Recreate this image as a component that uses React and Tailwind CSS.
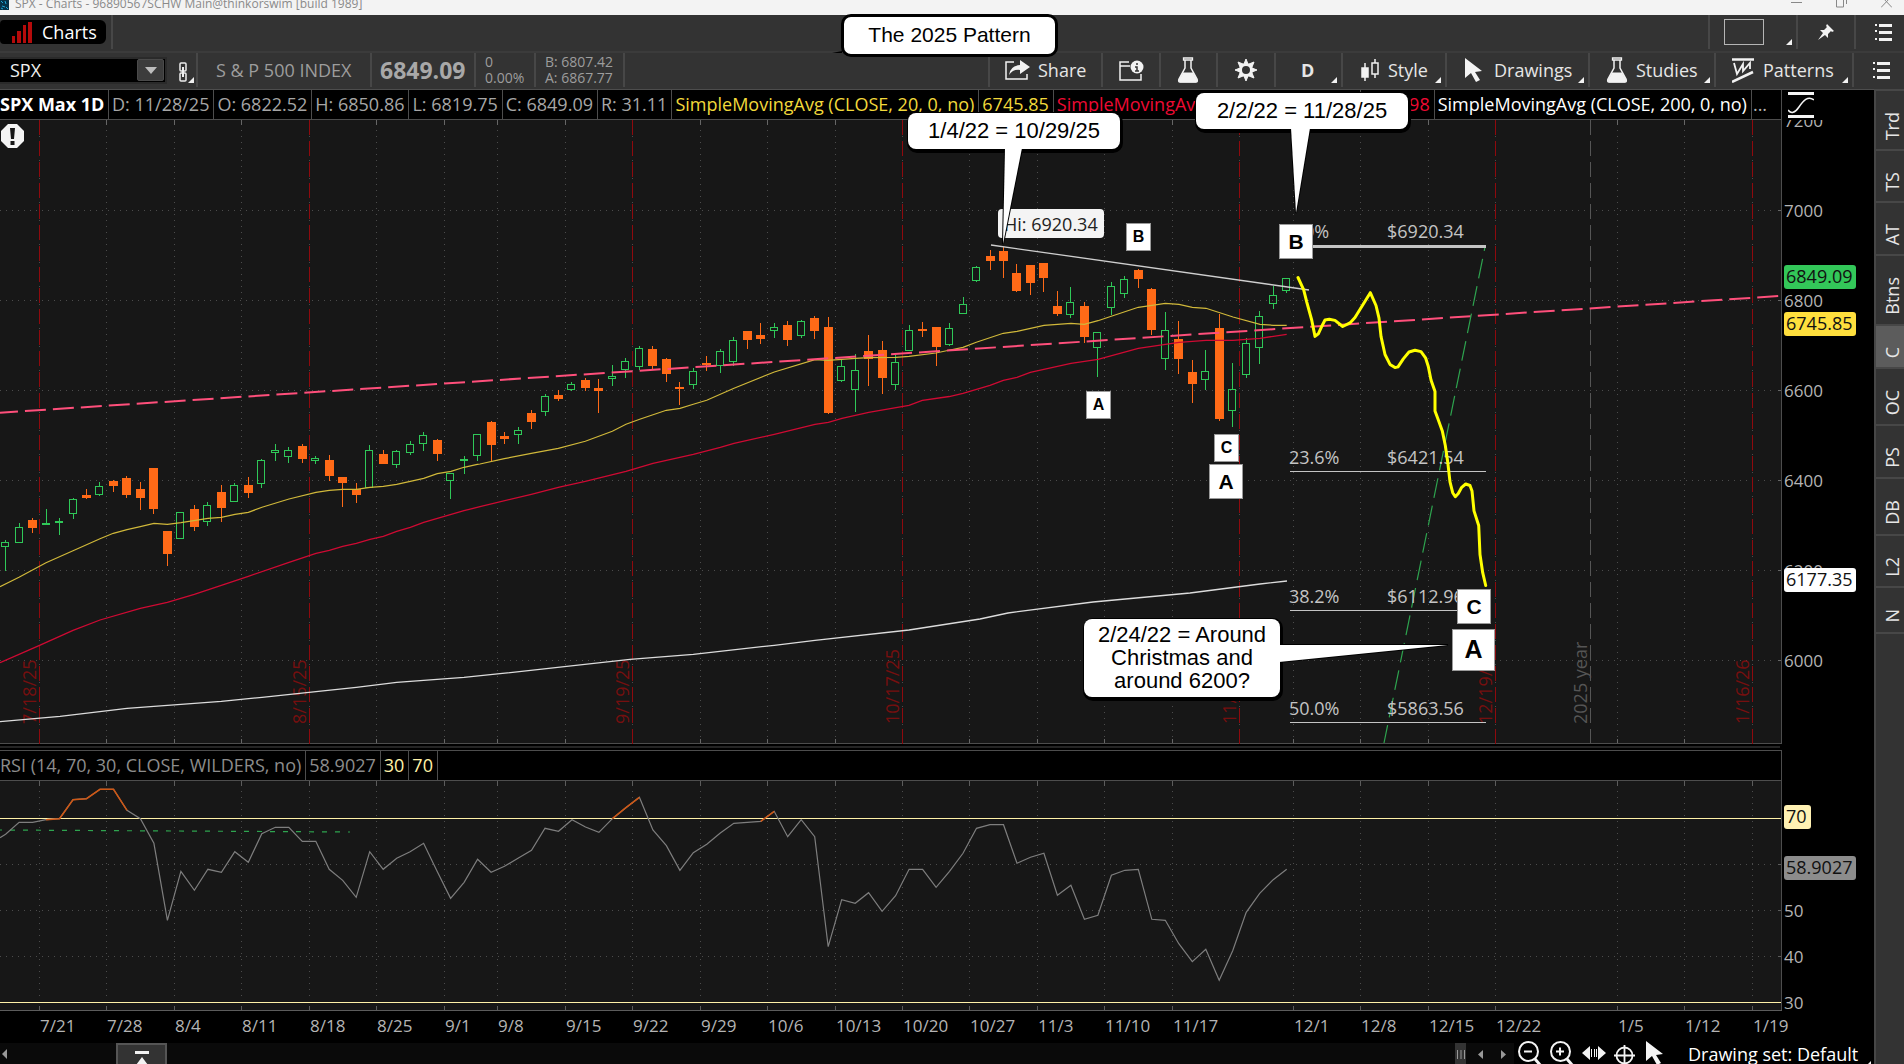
import React from "react";

const STEP = 13.485;
const FIRST = 5.6;
const cx = (i) => FIRST + i * STEP;

/* Candles: [direction, body top, body bottom, wick top, wick bottom], in thirds of a pixel below `base`. */
const CANDLES = [
  { base: 360, rows: [
    ["u",547,560,540,633],["u",501,548,489,548],["d",480,504,474,519],["u",489,494,447,494],["u",483,488,474,525],["u",418,461,414,477],["d",405,414,387,417],["u",378,405,366,408],["d",363,378,360,396],["d",354,405,348,414],["d",387,414,366,450],["d",324,447,324,462],["d",513,582,513,618],["u",457,536,457,536],["d",447,501,435,513],["u",435,486,426,498],["d",396,444,375,486],["u",375,425,369,425],["d",375,399,351,414],["u",300,371,297,384],["u",270,278,252,303],["u",270,290,261,309],["d",258,297,252,309],["u",294,302,288,312],["d",300,348,285,363],["d",351,369,351,441],["d",387,405,369,429],["u",270,383,255,383],["d",282,312,270,312],["u",273,314,270,324],["u",252,278,243,285],["u",225,251,216,273],["d",240,282,237,303],["u",339,362,339,417],["u",297,302,288,342],["u",222,288,222,303],["d",186,255,183,303],
  ] },
  { base: 280, rows: [
    ["d",468,477,456,492],["u",450,465,441,492],["d",399,426,390,447],["u",348,396,342,408],["d",345,357,330,363],["u",312,329,306,333],["d",300,324,294,333],["d",324,333,297,399],["u",288,297,255,318],["u",243,270,234,294],["u",204,261,198,270],["d",207,258,198,270],["d",237,282,234,306],["d",321,327,306,375],["u",273,315,264,327],["d",249,255,228,273],["u",213,258,207,279],["u",180,245,171,258],["d",153,180,153,207],["d",165,177,129,192],["u",141,153,129,174],["d",135,180,123,198],["u",123,168,120,174],["d",114,153,108,177],["d",141,399,111,402],["u",258,302,240,306],["u",270,329,222,396],["d",213,237,165,318],["d",210,294,183,342],["u",246,315,225,330],["u",150,213,135,213],["d",147,153,126,171],["d",141,201,141,258],["u",144,195,129,198],["u",72,102,51,102],
  ] },
  { base: 200, rows: [
    ["u",201,243,198,246],["d",168,183,150,210],["d",153,183,141,234],["d",219,273,192,276],["d",195,249,195,285],["d",189,234,189,276],["d",318,342,273,348],["u",306,345,261,354],["d",318,411,306,429],["u",396,443,396,531],["u",258,323,246,345],["u",237,282,228,294],["d",210,237,207,264],["d",267,390,264,405],["u",390,476,336,510],["d",417,477,363,522],["d",516,552,480,609],["u",513,540,450,570],["d",384,657,342,663],["u",567,632,489,681],["u",429,524,414,534],["u",348,443,333,492],["u",285,312,258,327],["u",234,272,234,279],
  ] },
].flatMap(({ base, rows }) => rows.map(([dir, ...v]) => [dir, ...v.map((y) => Math.round(base + y / 3))]));

const third = (ox, oy, list) => list.map(([x, y]) => `${(ox + x / 3).toFixed(1)},${(oy + y / 3).toFixed(1)}`).join(" ");

const MA20 = [
  third(0, 360, [[0,680],[57,652],[138,608],[219,572],[300,536],[340,520],[381,509],[421,500],[462,490],[502,493],[543,488],[624,475],[664,472],[705,463],[745,457],[786,442],[867,417],[948,397],[988,391],[1028,388],[1069,388],[1110,382],[1150,379],[1190,373],[1231,364],[1271,355],[1312,341],[1353,334],[1392,322],[1432,313]]),
  third(480, 280, [[0,552],[73,536],[154,520],[235,505],[316,484],[397,454],[438,433],[479,418],[519,404],[559,391],[600,385],[640,373],[680,361],[762,325],[883,276],[1005,239],[1045,241],[1126,235],[1166,233],[1248,232],[1287,229],[1368,219],[1410,210]]),
  third(900, 200, [[189,442],[229,427],[310,400],[351,394],[432,376],[513,370],[553,373],[594,362],[634,349],[715,322],[756,316],[796,310],[837,313],[877,322],[918,325],[999,351],[1080,373],[1120,376],[1160,376]]),
].join(" ");

const MA50 = [
  third(0, 360, [[0,908],[117,857],[219,811],[300,780],[421,745],[502,727],[583,703],[664,676],[745,649],[867,607],[948,580],[988,571],[1028,559],[1069,550],[1110,538],[1150,529],[1190,514],[1231,502],[1271,487],[1392,452]]),
  third(480, 280, [[0,680],[154,643],[235,622],[316,604],[438,574],[519,550],[640,523],[721,502],[762,490],[883,463],[1005,433],[1045,427],[1086,415],[1166,397],[1287,376],[1327,361],[1408,349]]),
  third(900, 200, [[68,601],[148,590],[189,580],[270,556],[310,541],[351,532],[391,517],[513,490],[594,478],[715,445],[837,427],[918,421],[999,421],[1080,415],[1160,403]]),
].join(" ");

const MA200 = [
  third(0, 360, [[0,1085],[180,1069],[381,1045],[664,1024],[786,1012],[948,995],[1069,982],[1190,967],[1392,952],[1500,941]]),
  third(480, 280, [[450,1138],[640,1123],[883,1096],[1005,1081],[1287,1050],[1500,1017]]),
  "1008,613 1093,602 1190,593 1260,584 1287,581",
].join(" ");

const WAVE = [[114,268],[131,302],[140,335],[155,385],[165,430],[175,423],[184,405],[195,385],[208,383],[225,386],[248,403],[270,393],[285,378],[331,310],[348,345],[357,380],[363,430],[375,480],[390,507],[405,516],[414,514],[430,492],[447,473],[465,468],[483,472],[497,490],[505,513],[513,550],[525,582],[525,635],[533,655],[547,690],[556,730],[563,775],[570,830],[578,860],[586,871],[595,862],[605,845],[617,836],[630,840],[636,855],[642,910],[656,950],[660,1030],[668,1080],[677,1115]]
  .map(([x, y]) => `${(1260 + x / 3).toFixed(1)},${(180 + y / 2.75).toFixed(1)}`).join(" ");

const RSI = [283,247,247,239,236,179,176,148,148,211,236,310,541,394,451,388,397,335,367,281,262,262,304,304,388,421,472,335,388,355,335,310,394,475,427,358,397,379,355,331,265,274,239,261,277,236,203,172,270,317,391,338,313,279,250,247,244,214,290,239,290,620,479,490,458,514,467,388,388,442,394,340,265,254,254,370,352,340,466,436,538,526,406,391,388,538,541,611,665,628,721,632,517,460,419,388]
  .map((y, i) => [cx(i), 740 + y / 3]);
const rsiPoints = (from, to) => RSI.slice(from, to + 1).map(([x, y]) => `${x.toFixed(1)},${y.toFixed(1)}`).join(" ");

const WEEKS = [
  [39,"7/21"],[106,"7/28"],[174,"8/4"],[241,"8/11"],[309,"8/18"],[376,"8/25"],[444,"9/1"],[497,"9/8"],[565,"9/15"],[632,"9/22"],[700,"9/29"],[767,"10/6"],[835,"10/13"],[902,"10/20"],[969,"10/27"],[1037,"11/3"],[1104,"11/10"],[1172,"11/17"],[1293,"12/1"],[1360,"12/8"],[1428,"12/15"],[1495,"12/22"],[1617,"1/5"],[1684,"1/12"],[1752,"1/19"],
];
const EXPIRIES = [[39,"7/18/25"],[309,"8/15/25"],[632,"9/19/25"],[902,"10/17/25"],[1239,"11/21/25"],[1495,"12/19/25"],[1752,"1/16/26"]];
const LEVELS = [[246,"0.0%","$6920.34"],[472,"23.6%","$6421.54"],[611,"38.2%","$6112.96"],[723,"50.0%","$5863.56"]];
const LETTERS = [
  ["B",1126,223,25,28,16],["A",1086,391,25,28,16],["C",1214,434,25,28,16],
  ["A",1209,464,34,35,21],["B",1279,224,34,35,21],["C",1457,589,34,35,21],["A",1452,629,43,42,25],
];

function Tag({ x = 1784, y, w = 72, fill, color = "#111", children }) {
  return (
    <g className="text-[18px]">
      <rect x={x} y={y} width={w} height="24" rx="3" fill={fill} />
      <text x={x + 2} y={y + 18} fill={color}>{children}</text>
    </g>
  );
}

function Callout({ x, y, w, h, tail, lines }) {
  return (
    <g className="font-['Liberation_Sans',sans-serif] text-[22px]">
      <rect x={x - 1} y={y - 1} width={w + 4} height={h + 5} rx="10" fill="#000" />
      <polygon points={tail} fill="#fff" stroke="#000" strokeWidth="2" />
      <rect x={x} y={y} width={w} height={h} rx="8" fill="#fff" />
      <polygon points={tail} fill="#fff" />
      {lines.map((t, i) => (
        <text key={t} x={x + w / 2} y={y + h / 2 + 7 + (i - (lines.length - 1) / 2) * 23} textAnchor="middle" fill="#000">{t}</text>
      ))}
    </g>
  );
}

function PricePane() {
  return (
    <svg viewBox="0 120 1874 624" className="relative block h-auto w-full overflow-visible bg-black text-[17px]" role="img" aria-label="SPX daily price chart">
      <defs>
        <clipPath id="pane"><rect x="0" y="120" width="1874" height="624" /></clipPath>
      </defs>
      <rect x="0" y="120" width="1782" height="624" fill="#171717" />
      <g stroke="#4c4c4c" strokeDasharray="1 5" shapeRendering="crispEdges">
        {[210, 300, 390, 480, 570, 660].map((y) => <line key={y} x1="0" x2="1772" y1={y + 0.5} y2={y + 0.5} />)}
        {WEEKS.map(([x]) => <line key={x} x1={x + 0.5} x2={x + 0.5} y1="130" y2="740" />)}
        <line x1="1239.5" x2="1239.5" y1="130" y2="740" />
      </g>
      <g stroke="#666" shapeRendering="crispEdges">
        {WEEKS.map(([x]) => <path key={x} d={`M${x + 0.5} 120v5M${x + 0.5} 739v4`} />)}
        {[210, 300, 390, 480, 570, 660].map((y) => <line key={y} x1="1778" x2="1782" y1={y + 0.5} y2={y + 0.5} />)}
        <line x1="1590.5" x2="1590.5" y1="120" y2="744" stroke="#555" strokeDasharray="15 6" />
        <line x1="1781.5" x2="1781.5" y1="120" y2="744" stroke="#4d4d4d" />
        <line x1="0" x2="1782" y1="743.5" y2="743.5" stroke="#4d4d4d" />
      </g>
      <g className="text-[18px]">
        {EXPIRIES.map(([x, t]) => (
          <g key={t}>
            <line x1={x + 0.5} x2={x + 0.5} y1="120" y2="744" stroke="#8e0a0e" strokeDasharray="15 6" shapeRendering="crispEdges" />
            <text transform={`translate(${x - 3} 724) rotate(-90)`} fill="#760f0f">{t}</text>
          </g>
        ))}
        <text transform="translate(1587 724) rotate(-90)" fill="#555">2025 year</text>
      </g>

      <g shapeRendering="crispEdges">
        {CANDLES.map(([dir, top, bottom, high, low], i) => {
          const x = Math.round(cx(i) - 0.5);
          const h = Math.max(bottom - top, 2);
          return dir === "d" ? (
            <g key={i} fill="#ff6a17">
              <rect x={x} y={high} width="1" height={low - high} />
              <rect x={x - 4} y={top} width="9" height={h} />
            </g>
          ) : (
            <g key={i} fill="#2fc858">
              <rect x={x} y={high} width="1" height={Math.max(top - high, 0)} />
              <rect x={x} y={bottom} width="1" height={Math.max(low - bottom, 0)} />
              {h < 3 ? <rect x={x - 4} y={top} width="8" height={h} /> : <rect x={x - 3.5} y={top + 0.5} width="7" height={h - 1} fill="none" stroke="#2fc858" />}
            </g>
          );
        })}
      </g>

      <g fill="none">
        <polyline points={MA20} stroke="#d0b83a" strokeWidth="1.2" />
        <polyline points={MA50} stroke="#cf0a33" strokeWidth="1.3" />
        <polyline points={MA200} stroke="#dcdcdc" strokeWidth="1.3" />
        <line x1="0" y1="412.7" x2="1779" y2="296" stroke="#ff4f7b" strokeWidth="2" strokeDasharray="21 7" strokeDashoffset="3" />
        <line x1="991" y1="245" x2="1309" y2="290" stroke="#cfcfcf" strokeWidth="1.3" />
        <line x1="1485" y1="247" x2="1384" y2="743" stroke="#2ea44f" strokeWidth="1.2" strokeDasharray="20 8" strokeDashoffset="16" />
      </g>

      {LEVELS.map(([y, pct, price], i) => (
        <g key={pct} fill="#c4c4c4" className="text-[18px]">
          <text x="1289" y={y - 8}>{pct}</text>
          <text x="1387" y={y - 8}>{price}</text>
          <rect x="1290" y={y - 1} width="196" height={i ? 1 : 3} shapeRendering="crispEdges" />
        </g>
      ))}
      <polyline points={WAVE} fill="none" stroke="#ffff00" strokeWidth="3" strokeLinejoin="round" strokeLinecap="round" />

      <g fill="#b4b4b4" clipPath="url(#pane)">
        {[7200, 7000, 6800, 6600, 6400, 6200, 6000].map((v, i) => <text key={v} x="1784" y={127 + i * 90}>{v}</text>)}
      </g>
      <Tag y={265} fill="#33c759">6849.09</Tag>
      <Tag y={312} fill="#ffdf3d">6745.85</Tag>
      <Tag y={568} fill="#fff">6177.35</Tag>

      <polygon points="8,124 17,124 24,131 24,141 17,148 8,148 1,141 1,131" fill="#f4f4f4" />
      <path d="M10 128h5l-1 11h-3zM10.500 141h4v4h-4z" fill="#171717" />

      <rect x="998" y="209" width="106" height="29" rx="4" fill="#f4f4f4" />
      <text x="1004" y="231" fill="#222" className="text-[18px]">Hi: 6920.34</text>

      <Callout x={908} y={113} w={212} h={36} tail="1005,148 1003,244 1022,148" lines={["1/4/22 = 10/29/25"]} />
      <Callout x={1196} y={93} w={212} h={36} tail="1291,128 1296,213 1310,128" lines={["2/2/22 = 11/28/25"]} />
      <Callout x={1084} y={619} w={196} h={78} tail="1279,645 1448,645 1279,662" lines={["2/24/22 = Around", "Christmas and", "around 6200?"]} />

      <g className="font-['Liberation_Sans',sans-serif] font-bold">
        {LETTERS.map(([t, x, y, w, h, s]) => (
          <g key={`${x}-${y}`}>
            <rect x={x + 0.5} y={y + 0.5} width={w - 1} height={h - 1} fill="#fff" stroke="#9a9a9a" />
            <text x={x + w / 2} y={y + h / 2 + Math.round(s / 3)} textAnchor="middle" fontSize={s} fill="#000">{t}</text>
          </g>
        ))}
      </g>
    </svg>
  );
}

function RsiPane() {
  return (
    <svg viewBox="0 781 1874 262" className="block h-auto w-full bg-black text-[17px]" role="img" aria-label="Relative strength index">
      <rect x="0" y="781" width="1782" height="230" fill="#171717" />
      <g stroke="#4c4c4c" strokeDasharray="1 5" shapeRendering="crispEdges">
        {[864, 910, 956].map((y) => <line key={y} x1="0" x2="1772" y1={y + 0.5} y2={y + 0.5} />)}
        {WEEKS.map(([x]) => <line key={x} x1={x + 0.5} x2={x + 0.5} y1="791" y2="1000" />)}
      </g>
      <g stroke="#5c5c5c" shapeRendering="crispEdges">
        {WEEKS.map(([x]) => <path key={x} d={`M${x + 0.5} 781v5M${x + 0.5} 1006v5`} />)}
        {[864, 910, 956].map((y) => <line key={y} x1="1778" x2="1782" y1={y + 0.5} y2={y + 0.5} />)}
        <line x1="1781.5" x2="1781.5" y1="781" y2="1011" stroke="#4d4d4d" />
        <line x1="0" x2="1782" y1="1010.5" y2="1010.5" />
        <line x1="0" x2="1781" y1="818.5" y2="818.5" stroke="#fff1a8" />
        <line x1="0" x2="1781" y1="1002.5" y2="1002.5" stroke="#fff1a8" />
      </g>
      <line x1="0" x2="350" y1="830" y2="832" stroke="#2ea44f" strokeWidth="1.2" strokeDasharray="5 8" strokeDashoffset="3" />
      <g fill="none" strokeWidth="1.2">
        <polyline points={`0,837.7 ${rsiPoints(0, 95)}`} stroke="#7e7e7e" />
        {[[3, 9], [45, 47], [56, 57]].map(([a, b]) => <polyline key={a} points={rsiPoints(a, b)} stroke="#cf5714" strokeWidth="1.5" />)}
      </g>
      <g fill="#b4b4b4">
        {[[50, 917], [40, 963], [30, 1009]].map(([v, y]) => <text key={v} x="1784" y={y}>{v}</text>)}
        {WEEKS.map(([x, t]) => <text key={t} x={x + 1} y="1032">{t}</text>)}
      </g>
      <Tag y={805} w={27} fill="#fff1b3">70</Tag>
      <Tag y={856} fill="#8c8c8c">58.9027</Tag>
    </svg>
  );
}

const Corner = () => (
  <svg viewBox="0 0 6 6" className="absolute right-1 bottom-1 size-[6px]" fill="#f2f2f2"><path d="M6 0v6H0z" /></svg>
);
const ListIcon = () => (
  <svg viewBox="0 0 18 17" className="h-[17px] w-[18px]" fill="#f2f2f2"><path d="M0 0h2v2H0zM4 0h13v3H4zM0 6h2v2H0zM4 7h13v3H4zM0 14h2v2H0zM4 14h13v3H4z" /></svg>
);
const Flask = () => (
  <svg viewBox="0 0 22 26" className="h-[26px] w-[22px]" fill="none" stroke="#f2f2f2">
    <path d="M6.500 1h9v2h-9z" strokeWidth="1.300" /><path d="M8 3v8L2 22q-1 3 1 3h16q2 0 1-3l-6-11V3" strokeWidth="1.500" /><path d="M6 16h10l4 7q0 2-1 2H3q-1 0-1-2z" fill="#f2f2f2" />
  </svg>
);
const Pointer = () => (
  <svg viewBox="0 0 18 24" className="h-[24px] w-[18px] shrink-0" fill="#f4f4f4"><path d="M0 0l17 13-7 1 5 8-4 2-5-9-6 5z" /></svg>
);

function Tool({ className, corner, label, children }) {
  return (
    <button type="button" aria-label={label} className={`relative flex h-[34px] shrink-0 items-center border-l-2 border-[#474747] text-[18px] text-[#e6e6e6] ${className}`}>
      {children}
      {corner && <Corner />}
    </button>
  );
}

const SIDE = [["Trd","h-[60px]"],["TS","h-[52px]"],["AT","h-[53px]"],["Btns","h-[70px]"],["C","h-[43px]"],["OC","h-[57px]"],["PS","h-[53px]"],["DB","h-[57px]"],["L2","h-[52px]"],["N","h-[46px]"]];
const OHLC = ["D: 11/28/25", "O: 6822.52", "H: 6850.86", "L: 6819.75", "C: 6849.09", "R: 31.11"];
const cell = "flex h-full shrink-0 items-center border-r border-[#4d4d4d] pr-1 pl-[3px]";

export default function App() {
  return (
    <div className="relative flex h-screen w-full flex-col overflow-hidden bg-black font-['Open_Sans','Noto_Sans',sans-serif]">
      <header className="flex h-[15px] shrink-0 items-start overflow-hidden bg-[#f3f3f3] text-[#8a8a8a]">
        <svg viewBox="0 0 9 10" className="h-[10px] w-[9px]"><rect width="9" height="10" fill="#06324a" /><path d="M1 1l2 2M5 1l1 3M2 6l3 1M6 7l2 2M1 8l2 1" stroke="#1fa5d8" /></svg>
        <h1 className="-mt-[6px] ml-1.5 text-[12px] leading-5">SPX - Charts - 96890567SCHW Main@thinkorswim [build 1989]</h1>
        <div className="mr-3 ml-auto flex gap-[34px]">
          <button type="button" aria-label="Minimize"><svg viewBox="0 0 11 8" className="h-2 w-[11px]" stroke="#888"><path d="M0 2.500h11" /></svg></button>
          <button type="button" aria-label="Restore"><svg viewBox="0 0 11 8" className="h-2 w-[11px]" stroke="#888" fill="none"><path d="M.500-1v8h7v-8M10.500-1v5" /></svg></button>
          <button type="button" aria-label="Close"><svg viewBox="0 0 11 8" className="h-2 w-[11px]" stroke="#888" fill="none"><path d="M0 7.500L9-2M11 7.500L2-2" /></svg></button>
        </div>
      </header>

      <nav className="flex h-9 shrink-0 items-start bg-[#333]">
        <button type="button" className="mt-[5px] flex h-6 w-[106px] items-center gap-[10px] rounded-r-md rounded-l-sm bg-black pl-3 text-[18px] text-white">
          <svg viewBox="0 0 20 21" className="h-[21px] w-[20px]" fill="#b50b0b"><path d="M0 14h3v7H0zM5 9h4v12H5zM11 3h3v18h-3zM16 0h4v21h-4z" /></svg>
          Charts
        </button>
        <div className="ml-[5px] h-[34px] w-[2px] bg-[#474747]" />
        <div className="ml-auto flex h-[34px]">
          <button type="button" aria-label="Workspace colour" className="relative flex w-[88px] items-center border-l-2 border-[#474747] pl-[14px]"><span className="h-[26px] w-10 border border-[#b5b5b5]" /><Corner /></button>
          <button type="button" aria-label="Pin" className="flex w-[58px] items-center border-l-2 border-[#474747] pl-5">
            <svg viewBox="0 0 16 16" className="size-4" fill="#f2f2f2"><path d="M9 0l7 7-2 1-1-1-3 3 0 4-3-3-7 5 5-7-3-3h4l3-3-1-1z" /></svg>
          </button>
          <button type="button" aria-label="Menu" className="relative flex w-[50px] items-center border-l-2 border-[#474747] pl-[19px]"><ListIcon /></button>
        </div>
      </nav>

      <section className="flex h-[38px] shrink-0 items-start border-t-2 border-[#3b3b3b] bg-[#333]">
        <div className="flex h-[34px] w-[196px] shrink-0 items-center">
          <div className="flex h-[27px] w-[167px] items-center border-2 border-l-0 border-[#2a2a2a] bg-black pr-px">
            <input aria-label="Symbol" defaultValue="SPX" className="w-0 grow bg-transparent pl-[10px] text-[18px] text-[#f0f0f0] outline-none" />
            <button type="button" aria-label="Symbol list" className="flex h-[22px] w-[27px] items-center justify-center rounded-xs border border-[#4a4a4a] bg-[#3c3c3c]">
              <svg viewBox="0 0 12 7" className="h-[7px] w-3" fill="#bdbdbd"><path d="M0 0h12L6 7z" /></svg>
            </button>
          </div>
          <button type="button" aria-label="Link" className="relative ml-3 h-[26px] w-[17px]">
            <svg viewBox="0 0 9 20" className="mt-1 h-5 w-[9px]" fill="none" stroke="#eee" strokeWidth="1.500"><rect x="1" y="1" width="6" height="8" rx="1" /><rect x="1" y="11" width="6" height="8" rx="1" /><path d="M4 5v10" strokeWidth="2" /></svg>
            <svg viewBox="0 0 6 6" className="absolute right-0.5 bottom-0 size-[6px]" fill="#eee"><path d="M6 0v6H0z" /></svg>
          </button>
        </div>
        <div className="flex h-[34px] w-[174px] shrink-0 items-center border-l-2 border-[#474747] pl-[18px] text-[18px] whitespace-nowrap text-[#9d9d9d]">S &amp; P 500 INDEX</div>
        <div className="flex h-[34px] w-[104px] shrink-0 items-center border-l-2 border-[#474747] pl-2 text-[23px] font-bold text-[#a8a8a8]">6849.09</div>
        <div className="flex h-[34px] w-[60px] shrink-0 flex-col justify-center border-l-2 border-[#474747] pl-[9px] text-[14px] leading-4 text-[#9d9d9d]"><span>0</span><span>0.00%</span></div>
        <div className="flex h-[34px] w-[91px] shrink-0 flex-col justify-center border-x-2 border-[#474747] pl-[9px] text-[14px] leading-4 text-[#9d9d9d]"><span>B: 6807.42</span><span>A: 6867.77</span></div>
        <div className="ml-auto flex">
          <Tool className="w-[113px] gap-2 pl-[15px]">
            <svg viewBox="0 0 25 20" className="h-5 w-[25px]" fill="none" stroke="#f2f2f2" strokeWidth="1.500"><path d="M9 2H1v17h21v-5" /><path d="M4 15q1-9 11-10V0l10 7-10 7V10Q8 9 4 15z" fill="#f2f2f2" stroke="none" /></svg>
            Share
          </Tool>
          <Tool className="w-[58px] pl-4" label="Info">
            <svg viewBox="0 0 25 21" className="h-[21px] w-[25px]" fill="none" stroke="#f2f2f2" strokeWidth="1.500"><path d="M10 2H1v18h21v-6M1 6h10" /><circle cx="18" cy="7" r="6.500" fill="#f2f2f2" stroke="none" /><path d="M18 3v2M16 7h2v4M16 11h4" stroke="#333" /></svg>
          </Tool>
          <Tool className="w-[57px] pl-4" label="Lab"><Flask /></Tool>
          <Tool className="w-[58px] pl-4" label="Settings">
            <svg viewBox="-12 -12 24 24" className="size-6" fill="none" stroke="#f2f2f2">
              <circle r="5.500" strokeWidth="3" />
              <path d="M-2-6L0-11 2-6zM-2 6L0 11 2 6zM-6-2L-11 0-6 2zM6-2L11 0 6 2zM-6-3L-8-8-3-6zM6-3L8-8 3-6zM-6 3L-8 8-3 6zM6 3L8 8 3 6z" fill="#f2f2f2" />
            </svg>
          </Tool>
          <Tool className="w-[67px] pl-[25px] text-[17px] font-bold" corner>D</Tool>
          <Tool className="w-[104px] gap-[9px] pl-[18px]" corner>
            <svg viewBox="0 0 18 22" className="h-[22px] w-[18px]" stroke="#f2f2f2" fill="none" strokeWidth="1.500"><path d="M4 4v18M14 0v4M14 15v4" /><path d="M1 9h6v9H1z" fill="#f2f2f2" /><path d="M11 4h6v11h-6z" /></svg>
            Style
          </Tool>
          <Tool className="w-[143px] gap-[11px] pl-[18px]" corner><Pointer />Drawings</Tool>
          <Tool className="w-[126px] gap-2 pl-4" corner><Flask />Studies</Tool>
          <Tool className="w-[138px] gap-[9px] pl-4" corner>
            <svg viewBox="0 0 22 25" className="h-[25px] w-[22px]" stroke="#f2f2f2" fill="none"><path d="M0 1.500h22M0 24L21 14" strokeWidth="2.500" /><path d="M2 5l3 11 6-10 0 7 7-8v6" strokeWidth="1.800" /></svg>
            Patterns
          </Tool>
          <Tool className="w-[52px] pl-[19px]" label="Chart menu"><ListIcon /></Tool>
        </div>
      </section>

      <div className="flex min-h-0 grow">
        <main className="min-w-0 grow">
          <div className="flex h-[31px] border-t border-[#4d4d4d] text-[18px] whitespace-nowrap">
            <div className="flex min-w-0 grow overflow-hidden border-r border-b border-[#4d4d4d]">
              <span className="flex h-full w-[109px] shrink-0 items-center border-r border-[#4d4d4d] font-bold text-white">SPX Max 1D</span>
              {OHLC.map((t) => <span key={t} className={`${cell} text-[#a6a6a6]`}>{t}</span>)}
              <span className={`${cell} text-[#f2d93b]`}>SimpleMovingAvg (CLOSE, 20, 0, no)</span>
              <span className={`${cell} text-[#f2d93b]`}>6745.85</span>
              <span className={`${cell} text-[#ee0a33]`}>SimpleMovingAvg (CLOSE, 50, 0, no)</span>
              <span className={`${cell} w-[74px] justify-end text-[#ee0a33]`}>98</span>
              <span className={`${cell} text-white`}>SimpleMovingAvg (CLOSE, 200, 0, no)</span>
              <span className="flex items-center pl-px text-[#b4b4b4]">...</span>
            </div>
            <div className="w-[92px] shrink-0 pt-0.5 pl-1.5">
              <svg viewBox="0 0 26 26" className="size-[26px]" fill="none" stroke="#f4f4f4"><path d="M0 1.500h26M0 24.500h26" strokeWidth="3" /><path d="M0 18c3 4 7 3 11-3s9-12 15-7" strokeWidth="1.500" /></svg>
            </div>
          </div>

          <PricePane />

          <div className="flex h-[37px] flex-col pt-0.5">
            <div className="mr-[94px] h-0.5 shrink-0 bg-[#242424]" />
            <div className="mt-0.5 mr-[92px] flex grow border-y border-r border-[#4d4d4d] text-[18px] text-[#8c8c8c]">
              <span className="flex items-center border-r border-[#4d4d4d] pr-1">RSI (14, 70, 30, CLOSE, WILDERS, no)</span>
              <span className={cell}>58.9027</span>
              <span className={`${cell} text-[#fff1a8]`}>30</span>
              <span className={`${cell} text-[#fff1a8]`}>70</span>
            </div>
          </div>

          <RsiPane />

          <div className="flex h-[22px] items-start text-[18px] text-white">
            <div className="flex h-full grow bg-[#0a0a0a]">
              <button type="button" aria-label="Scroll back" className="flex w-[113px] items-center pl-0.5"><svg viewBox="0 0 5 10" className="h-[10px] w-[5px]" fill="#999"><path d="M5 0v10L0 5z" /></svg></button>
              <button type="button" aria-label="Expand panel" className="ml-[3px] flex h-[30px] w-[51px] justify-center border-2 border-[#555] bg-[#333]">
                <svg viewBox="0 0 14 18" className="mt-[6px] h-[18px] w-[14px]" fill="#f2f2f2"><path d="M0 0h14v3H0zM7 6l6 8H1z" /></svg>
              </button>
              <button type="button" aria-label="Scroll thumb" className="ml-auto flex w-[11px] items-center justify-center bg-[#333]"><svg viewBox="0 0 8 9" className="h-[9px] w-2" stroke="#999"><path d="M.500 0v9M4 0v9M7.500 0v9" /></svg></button>
              <button type="button" aria-label="Scroll left" className="ml-3 flex items-center"><svg viewBox="0 0 5 9" className="h-[9px] w-[5px]" fill="#999"><path d="M5 0v9L0 4.500z" /></svg></button>
              <button type="button" aria-label="Scroll right" className="mr-2 ml-[18px] flex items-center"><svg viewBox="0 0 5 9" className="h-[9px] w-[5px]" fill="#999"><path d="M0 0v9l5-4.500z" /></svg></button>
            </div>
            <div className="relative flex w-[360px] shrink-0 items-start pl-1">
              {["M6 10.500h8", "M6 10.500h8M10 6.500v8"].map((d, i) => (
                <button key={d} type="button" aria-label={i ? "Zoom in" : "Zoom out"} className="mr-2 -mt-0.5"><svg viewBox="0 0 24 26" className="h-[26px] w-6" fill="none" stroke="#f4f4f4" strokeWidth="2"><circle cx="10.500" cy="10.500" r="9.500" /><path d="M17 18l6 7" strokeWidth="3" /><path d={d} /></svg></button>
              ))}
              <button type="button" aria-label="Fit width" className="mt-[3px]"><svg viewBox="0 0 24 14" className="h-[14px] w-6" fill="#f4f4f4"><path d="M0 7l8-7v14zM24 7l-8-7v14zM9 3h1v8H9zM12 3h1v8h-1zM14 3h1v8h-1z" /></svg></button>
              <button type="button" aria-label="Crosshair" className="mt-0.5 ml-2"><svg viewBox="0 0 21 21" className="size-[21px]" fill="none" stroke="#f4f4f4" strokeWidth="1.800"><circle cx="10.500" cy="10.500" r="8" /><path d="M0 10.500h21M10.500 0v21" /></svg></button>
              <button type="button" aria-label="Pointer" className="-mt-0.5 ml-[11px]"><Pointer /></button>
              <button type="button" className="ml-6 leading-[22px] whitespace-nowrap">Drawing set: Default</button>
              <svg viewBox="0 0 6 6" className="absolute right-[3px] bottom-0 size-[6px]" fill="#f2f2f2"><path d="M6 0v6H0z" /></svg>
            </div>
          </div>
        </main>

        <aside className="flex w-[30px] shrink-0 flex-col border-l-2 border-[#474747] bg-[#333]">
          {SIDE.map(([t, h]) => (
            <button key={t} type="button" className={`flex shrink-0 items-center justify-center border-t-2 border-[#474747] pt-3 pl-1 text-[18px] text-[#e6e6e6] ${h} ${t === "C" ? "bg-[#5c5c5c]" : ""}`}>
              <span className="rotate-180 leading-6 [writing-mode:vertical-rl]">{t}</span>
            </button>
          ))}
          <div className="border-t-2 border-[#474747]" />
        </aside>
      </div>

      <div className="absolute top-[14px] left-[841px] flex h-[43px] w-[217px] items-center justify-center rounded-[10px] border-3 border-black bg-white pb-0.5 font-['Liberation_Sans',sans-serif] text-[21px] text-black">
        The 2025 Pattern
        <svg viewBox="0 0 10 3" className="absolute top-[34px] -left-3 h-[3px] w-[10px]"><path d="M10 0v2L0 2z" /></svg>
      </div>
    </div>
  );
}
